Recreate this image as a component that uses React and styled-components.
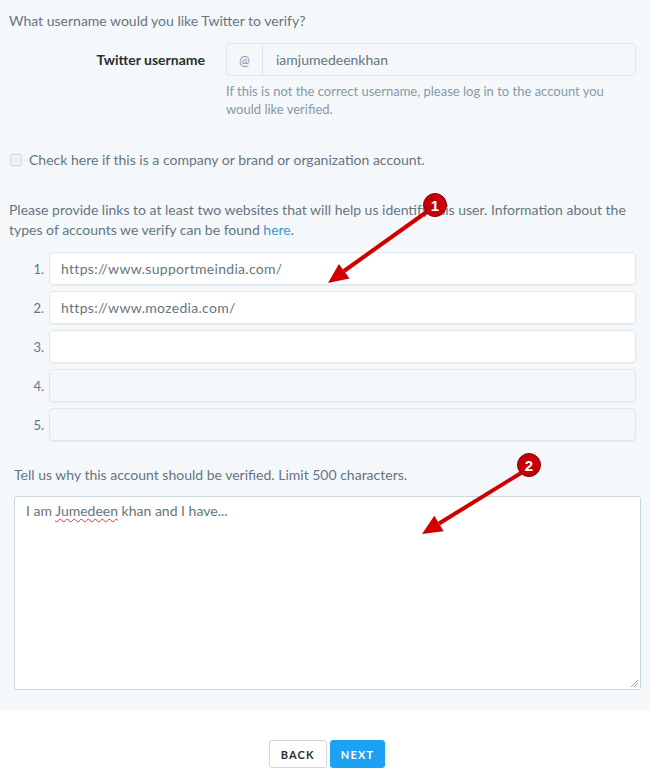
import React from "react";
import styled, { createGlobalStyle } from "styled-components";

const GlobalStyle = createGlobalStyle`
  html, body { margin: 0; padding: 0; background: #ffffff; }
  body { font-family: Lato, "Open Sans", "Liberation Sans", sans-serif; color: #66757f; }
  * { box-sizing: border-box; }
`;

const Page = styled.div`
  position: relative;
  width: 650px;
  min-height: 784px;
  background: #ffffff;
`;

const Panel = styled.section`
  background: #f5f8fa;
  padding: 11px 14px 20px 9px;
`;

const Question = styled.p`
  margin: 0;
  font-size: 14px;
  line-height: 20px;
  color: #66757f;
`;

const FieldRow = styled.div`
  display: grid;
  grid-template-columns: 196px 1fr;
  column-gap: 21px;
  margin-top: 12px;
`;

const Label = styled.label`
  font-size: 14px;
  font-weight: 700;
  color: #292f33;
  text-align: right;
  line-height: 33px;
`;

const InputGroup = styled.div`
  display: flex;
  height: 33px;
  border: 1px solid #e1e8ed;
  border-radius: 4px;
  background: #f5f8fa;
  overflow: hidden;
`;

const Addon = styled.span`
  width: 36px;
  display: flex;
  align-items: center;
  justify-content: center;
  font-size: 13px;
  color: #8899a6;
  border-right: 1px solid #e1e8ed;
`;

const GroupValue = styled.span`
  flex: 1;
  display: flex;
  align-items: center;
  padding-left: 13px;
  font-size: 14px;
  color: #66757f;
`;

const Help = styled.p`
  grid-column: 2;
  margin: 6px 0 0;
  font-size: 13px;
  line-height: 18px;
  color: #8899a6;
`;

const CheckRow = styled.label`
  display: flex;
  align-items: center;
  gap: 7px;
  margin-top: 32px;
  padding-left: 1px;
  font-size: 14px;
  line-height: 20px;
  color: #66757f;
`;

const Check = styled.span`
  width: 12px;
  height: 12px;
  border: 1px solid #ccd6dd;
  border-radius: 2px;
  background: #eef1f4;
`;

const Para = styled.p`
  margin: 30px 0 0;
  font-size: 14px;
  line-height: 20px;
  color: #66757f;
`;

const Link = styled.a`
  color: #3b94d9;
  text-decoration: none;
`;

const UrlList = styled.ol`
  list-style: none;
  margin: 12px 0 0;
  padding: 0;
  display: flex;
  flex-direction: column;
  gap: 6px;
`;

const UrlItem = styled.li`
  display: grid;
  grid-template-columns: 35px 1fr;
  column-gap: 5px;
  align-items: center;
`;

const Num = styled.span`
  text-align: right;
  font-size: 13px;
  color: #66757f;
`;

const UrlBox = styled.div`
  height: 33px;
  border: 1px solid #e1e8ed;
  border-radius: 4px;
  background: ${(p) => (p.$disabled ? "#f5f8fa" : "#ffffff")};
  box-shadow: 0 1px 1px rgba(0, 0, 0, 0.04);
  display: flex;
  align-items: center;
  padding-left: 11px;
  font-size: 14px;
  letter-spacing: 0.3px;
  color: #66757f;
`;

const Reason = styled.div`
  margin-top: 24px;
  padding: 0 0 0 5px;
  margin-right: -5px;
`;

const ReasonLabel = styled.p`
  margin: 0;
  font-size: 14px;
  line-height: 20px;
  color: #66757f;
`;

const TextBox = styled.div`
  position: relative;
  margin-top: 11px;
  height: 194px;
  border: 1px solid #ccd6dd;
  border-radius: 3px;
  background: #ffffff;
  padding: 5px 11px;
  font-size: 14px;
  line-height: 18px;
  color: #66757f;
`;

const Misspelled = styled.span`
  text-decoration: underline wavy #e0342f;
  text-decoration-thickness: 1px;
  text-underline-offset: 2px;
`;

const Grip = styled.svg`
  position: absolute;
  right: 1px;
  bottom: 1px;
`;

const Footer = styled.div`
  display: flex;
  justify-content: center;
  gap: 3px;
  padding: 30px 0 0 4px;
`;

const Button = styled.button`
  height: 28px;
  padding: 0 ${(p) => (p.$primary ? "10px" : "11px")};
  border-radius: 3px;
  border: 1px solid ${(p) => (p.$primary ? "#1da1f2" : "#ccd6dd")};
  background: ${(p) => (p.$primary ? "#1da1f2" : "#ffffff")};
  color: ${(p) => (p.$primary ? "#ffffff" : "#292f33")};
  font-family: Lato, "Open Sans", "Liberation Sans", sans-serif;
  font-size: 11px;
  font-weight: 700;
  letter-spacing: 1.2px;
`;

const Overlay = styled.svg`
  position: absolute;
  left: 0;
  top: 0;
  pointer-events: none;
`;

const urls = [
  "https://www.supportmeindia.com/",
  "https://www.mozedia.com/",
  "",
  "",
  "",
];

function Marker({ cx, cy, n }) {
  return (
    <g>
      <circle cx={cx} cy={cy} r="11.5" fill="#c6000b" stroke="#8c0006" strokeWidth="1" />
      <text
        x={cx}
        y={cy + 5.5}
        textAnchor="middle"
        fontFamily="Liberation Sans, Arial, sans-serif"
        fontWeight="700"
        fontSize="15"
        fill="#ffffff"
      >
        {n}
      </text>
    </g>
  );
}

export default function App() {
  return (
    <Page>
      <GlobalStyle />
      <Panel>
        <Question>What username would you like Twitter to verify?</Question>
        <FieldRow>
          <Label>Twitter username</Label>
          <InputGroup>
            <Addon>@</Addon>
            <GroupValue>iamjumedeenkhan</GroupValue>
          </InputGroup>
          <Help>
            If this is not the correct username, please log in to the account you
            would like verified.
          </Help>
        </FieldRow>

        <CheckRow>
          <Check />
          Check here if this is a company or brand or organization account.
        </CheckRow>

        <Para>
          Please provide links to at least two websites that will help us identify this
          user. Information about the types of accounts we verify can be found{" "}
          <Link href="#">here</Link>.
        </Para>

        <UrlList>
          {urls.map((u, i) => (
            <UrlItem key={i}>
              <Num>{i + 1}.</Num>
              <UrlBox $disabled={i > 2}>{u}</UrlBox>
            </UrlItem>
          ))}
        </UrlList>

        <Reason>
          <ReasonLabel>Tell us why this account should be verified. Limit 500 characters.</ReasonLabel>
          <TextBox role="textbox">
            I am <Misspelled>Jumedeen</Misspelled> khan and I have...
            <Grip width="9" height="9" viewBox="0 0 9 9">
              <path d="M8 1 L1 8 M8 4 L4 8" stroke="#9aa4ab" strokeWidth="1" />
            </Grip>
          </TextBox>
        </Reason>
      </Panel>

      <Footer>
        <Button>BACK</Button>
        <Button $primary>NEXT</Button>
      </Footer>

      <Overlay width="650" height="784" viewBox="0 0 650 784">
        <g fill="#d00000" stroke="none">
          <line x1="428" y1="211" x2="344" y2="271" stroke="#d00000" strokeWidth="4" />
          <polygon points="328,283 349.5,278.6 338.9,264" />
          <line x1="521" y1="473" x2="439" y2="523.5" stroke="#d00000" strokeWidth="4" />
          <polygon points="422,534 443.7,531.2 434.3,515.8" />
        </g>
        <Marker cx={435} cy={205} n="1" />
        <Marker cx={529} cy={465} n="2" />
      </Overlay>
    </Page>
  );
}
